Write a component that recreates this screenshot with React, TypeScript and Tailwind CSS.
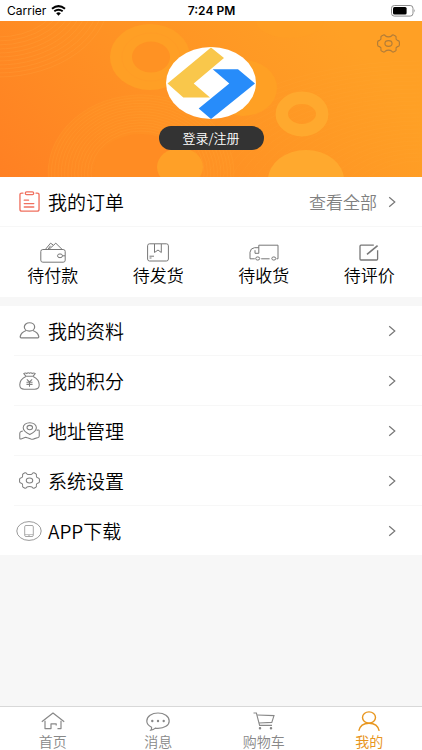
import React from 'react';

interface IconProps {
  className?: string;
}

const GEAR_PATH =
  'M6.2 0.9 Q7.4 0.7 8.2 1.9 Q9 2.7 11 2.7 Q13 2.7 13.8 1.9 Q14.6 0.7 15.8 0.9 L17.6 1.8 Q18.6 2.4 18.2 3.8 Q17.8 5.4 19.6 6 Q21.4 6.4 21.4 7.6 V10.4 Q21.4 11.6 19.6 12 Q17.8 12.6 18.2 14.2 Q18.6 15.6 17.6 16.2 L15.8 17.1 Q14.6 17.3 13.8 16.1 Q13 15.3 11 15.3 Q9 15.3 8.2 16.1 Q7.4 17.3 6.2 17.1 L4.4 16.2 Q3.4 15.6 3.8 14.2 Q4.2 12.6 2.4 12 Q0.6 11.6 0.6 10.4 V7.6 Q0.6 6.4 2.4 6 Q4.2 5.4 3.8 3.8 Q3.4 2.4 4.4 1.8 Z';

const GearIcon: React.FC<IconProps> = ({ className }) => (
  <svg viewBox="0 0 22 18" preserveAspectRatio="none" className={className} fill="none" stroke="currentColor" strokeWidth="1.1" aria-hidden="true">
    <path d={GEAR_PATH} />
    <ellipse cx="11" cy="9" rx="3.4" ry="2.7" />
  </svg>
);

const ClipboardIcon: React.FC<IconProps> = ({ className }) => (
  <svg viewBox="0 0 22 22" className={className} fill="none" stroke="currentColor" strokeWidth="1.4" strokeLinecap="round" aria-hidden="true">
    <path d="M4.2 2.2 H3 Q1 2.2 1 4 V19 Q1 21 3 21 H19 Q21 21 21 19 V4 Q21 2.2 19 2.2 H17.8" />
    <rect x="6.6" y="1" width="8.8" height="2.8" rx="1.4" />
    <path d="M5.5 9.6 H10 M5.5 13.2 H15.5 M5.5 16.8 H15.5" />
  </svg>
);

const WalletIcon: React.FC<IconProps> = ({ className }) => (
  <svg viewBox="0 0 26 21" className={className} fill="none" stroke="currentColor" aria-hidden="true">
    <rect x="0.8" y="7.5" width="24.4" height="12.7" rx="2" />
    <path d="M5.5 7.3 L10.5 1.2 L13 2.8 M9 7.3 L15.8 1.2 L22 7.3 M10.5 3.8 L8 7.3" />
    <ellipse cx="20" cy="13.8" rx="2.5" ry="1.9" />
    <path d="M22.5 13.8 H25" />
  </svg>
);

const BoxIcon: React.FC<IconProps> = ({ className }) => (
  <svg viewBox="0 0 22 19" className={className} fill="none" stroke="currentColor" aria-hidden="true">
    <rect x="0.6" y="0.8" width="20.8" height="17.2" rx="2" />
    <path d="M7.5 1 V9.5 L11 7 L14.3 9.5 V1 M2.5 13.2 H7 M2.5 15 H4.5" />
  </svg>
);

const TruckIcon: React.FC<IconProps> = ({ className }) => (
  <svg viewBox="0 0 30 17" className={className} fill="none" stroke="currentColor" aria-hidden="true">
    <path d="M5.8 14.8 H1 V8.2 Q1.4 4.2 5.5 3.7 H9.8 M9.8 9.3 V1.2 H29 V14.8 H27.6 M9.8 9.3 H6 V6.2 M12.2 14.8 H20.6" />
    <ellipse cx="8.7" cy="14.5" rx="2" ry="1.6" />
    <ellipse cx="24.8" cy="14.5" rx="2" ry="1.6" />
  </svg>
);

const ReviewIcon: React.FC<IconProps> = ({ className }) => (
  <svg viewBox="0 0 20 17" className={className} fill="none" stroke="currentColor" strokeWidth="1.3" aria-hidden="true">
    <path d="M14.8 1.2 H2 Q1 1.2 1 2.2 V15 Q1 16 2 16 H17.6 Q18.6 16 18.6 15 V6.2" />
    <path d="M8 10.3 L18.6 1.6" strokeWidth="1.6" />
  </svg>
);

const ProfileIcon: React.FC<IconProps> = ({ className }) => (
  <svg viewBox="0 0 22 18" preserveAspectRatio="none" className={className} fill="none" stroke="currentColor" strokeWidth="1.3" aria-hidden="true">
    <ellipse cx="11" cy="5.2" rx="5.4" ry="4.4" />
    <path d="M7.5 9 Q2.2 11 1.3 15.3 Q1.2 16.9 3 16.9 H19 Q20.8 16.9 20.7 15.3 Q19.8 11 14.5 9" />
  </svg>
);

const PointsIcon: React.FC<IconProps> = ({ className }) => (
  <svg viewBox="0 0 22 18" preserveAspectRatio="none" className={className} fill="none" stroke="currentColor" strokeWidth="1.1" aria-hidden="true">
    <path d="M7.2 4.2 L5 1.6 Q6.5 0.5 8.2 1.5 Q9.5 0.2 11 1.3 Q12.5 0.2 13.8 1.5 Q15.5 0.5 17 1.6 L14.8 4.2 Z" />
    <path d="M7.2 4.5 C3.5 6.2 0.8 9.5 0.8 12.8 Q0.8 17.2 5.5 17.2 H16.5 Q21.2 17.2 21.2 12.8 C21.2 9.5 18.5 6.2 14.8 4.5" />
    <path d="M8.2 7.4 L11 10 L13.8 7.4 M11 10 V14.8 M7.8 10.3 H14.2 M7.8 12.4 H14.2" />
  </svg>
);

const AddressIcon: React.FC<IconProps> = ({ className }) => (
  <svg viewBox="0 0 22 18" preserveAspectRatio="none" className={className} fill="none" stroke="currentColor" strokeWidth="1.1" aria-hidden="true">
    <path d="M11.3 12.6 C7 10.6 4.4 8.6 4.4 5.8 C4.4 2.9 7.3 0.7 11.3 0.7 C15.3 0.7 18.2 2.9 18.2 5.8 C18.2 8.6 15.6 10.6 11.3 12.6 Z" />
    <ellipse cx="11.3" cy="5.6" rx="2.9" ry="2.2" />
    <path d="M4 9 L2.2 9.6 Q0.8 10.2 0.8 11.6 V16.2 Q0.8 17.3 2.2 16.9 L6.2 15.5 Q7.5 15.2 8.8 15.7 L12.5 17 Q14 17.4 15.5 16.9 L20 15.6 Q21.2 15.1 21.2 14 V8.9 Q21.2 7.8 20 8 L18.5 8.4" />
  </svg>
);

const DownloadIcon: React.FC<IconProps> = ({ className }) => (
  <svg viewBox="0 0 26 20" className={className} fill="none" stroke="currentColor" aria-hidden="true">
    <ellipse cx="13" cy="10" rx="12.2" ry="9.4" opacity="0.8" />
    <rect x="8.7" y="4.5" width="8.6" height="11" rx="1.2" opacity="0.7" />
    <path d="M9 13.6 H17 M12.2 14.6 H13.8" opacity="0.5" />
  </svg>
);

const ChevronIcon: React.FC<IconProps> = ({ className }) => (
  <svg viewBox="0 0 8 12" className={className} fill="none" stroke="currentColor" strokeWidth="1.2" aria-hidden="true">
    <path d="M1.2 1.2 L6.8 6 L1.2 10.8" />
  </svg>
);

const HomeIcon: React.FC<IconProps> = ({ className }) => (
  <svg viewBox="0 0 24 18" className={className} fill="none" stroke="currentColor" strokeWidth="1.2" strokeLinejoin="round" aria-hidden="true">
    <path d="M0.8 9.8 L12 1 L23.2 9.8" />
    <path d="M4 8.8 V16.6 H10 V11.8 H15.2 V13.6 M16.5 16.6 H20 V8.8" />
  </svg>
);

const MessageIcon: React.FC<IconProps> = ({ className }) => (
  <svg viewBox="0 0 24 19" className={className} fill="none" stroke="currentColor" strokeWidth="1.2" aria-hidden="true">
    <path d="M5.5 15.2 C2.5 13.7 0.8 11.6 0.8 9 C0.8 4.4 5.8 1 12 1 C18.2 1 23.2 4.4 23.2 9 C23.2 13.4 18.2 16.4 12 16.4 Q10.5 16.4 9.3 16.1 Q7.5 17.8 4.8 18.2 Q5.9 16.8 5.5 15.2 Z" />
    <g fill="currentColor" stroke="none">
      <circle cx="6.3" cy="9" r="1.2" />
      <circle cx="12" cy="9" r="1.2" />
      <circle cx="17.7" cy="9" r="1.2" />
    </g>
  </svg>
);

const CartIcon: React.FC<IconProps> = ({ className }) => (
  <svg viewBox="0 0 22 18" className={className} fill="none" stroke="currentColor" strokeWidth="1.1" aria-hidden="true">
    <path d="M0.5 1 H3.4 L6.6 13.4 H19" />
    <path d="M4.2 3 L21 3.6 L18.8 10.4 L6 11" />
    <circle cx="7" cy="16.2" r="0.7" fill="currentColor" />
    <circle cx="18" cy="16.2" r="0.7" fill="currentColor" />
  </svg>
);

const MineIcon: React.FC<IconProps> = ({ className }) => (
  <svg viewBox="0 0 22 20" className={className} fill="none" stroke="currentColor" strokeWidth="1.4" aria-hidden="true">
    <ellipse cx="11" cy="6.5" rx="6.5" ry="5.6" />
    <path d="M0.8 19.8 Q2.4 12.2 11 12.2 Q19.6 12.2 21.2 19.8" />
  </svg>
);

const StatusBar: React.FC = () => (
  <div className="h-[21px] grid grid-cols-3 items-center bg-white pl-[7px] pr-[6px] text-xs font-normal text-black font-['Inter',sans-serif]">
    <div className="flex items-center gap-[5px]">
      <span>Carrier</span>
      <svg viewBox="0 0 15 11" className="w-[15px] h-[11px]" aria-hidden="true">
        <path d="M1 3.8 Q7.5 -1.6 14 3.8" fill="none" stroke="#000" strokeWidth="2" />
        <path d="M3.3 6.3 Q7.5 3 11.7 6.3" fill="none" stroke="#000" strokeWidth="1.9" />
        <path d="M5.2 8.3 Q7.5 6.4 9.8 8.3 L7.5 10.8 Z" />
      </svg>
    </div>
    <span className="text-center font-semibold">7:24 PM</span>
    <svg viewBox="0 0 25 12" className="w-[25px] h-3 justify-self-end" aria-hidden="true">
      <rect x="0.5" y="0.5" width="21.5" height="10.6" rx="2.8" fill="none" stroke="#8d8d8d" />
      <rect x="2" y="2" width="13.6" height="7.6" rx="1.5" />
      <path d="M23.3 4 Q24.8 5.8 23.3 7.6 Z" fill="#8d8d8d" />
    </svg>
  </div>
);

const BannerPattern: React.FC = () => (
  <svg viewBox="0 0 422 156" preserveAspectRatio="none" className="absolute inset-0 w-full h-full" aria-hidden="true">
    <defs>
      <linearGradient id="banner" gradientUnits="userSpaceOnUse" x1="0" y1="156" x2="260" y2="-80">
        <stop offset="0" stopColor="#ff8023" />
        <stop offset="0.5" stopColor="#ff9224" />
        <stop offset="1" stopColor="#ffa025" />
      </linearGradient>
    </defs>
    <rect width="422" height="156" fill="url(#banner)" />
    <g fill="none" stroke="#ffb14a" strokeOpacity="0.25" strokeWidth="0.8">
      {Array.from({ length: 11 }, (_, i) => (
        <ellipse key={i} cx="-2" cy="-26" rx={62 + i * 5} ry={42 + i * 4} />
      ))}
    </g>
    <g fill="none" stroke="#ffb14a" strokeOpacity="0.1" strokeWidth="0.8">
      {Array.from({ length: 26 }, (_, i) => (
        <ellipse key={i} cx="420" cy="190" rx={70 + i * 8} ry={50 + i * 4} />
      ))}
    </g>
    <ellipse cx="141" cy="152" rx="93" ry="78" fill="#ff9624" fillOpacity="0.25" />
    <g fill="none" stroke="#ffae3e" strokeOpacity="0.22" strokeWidth="0.8">
      {Array.from({ length: 14 }, (_, i) => (
        <ellipse key={i} cx="141" cy="152" rx={50 + i * 3.3} ry={42 + i * 2.77} />
      ))}
    </g>
    <ellipse cx="141" cy="152" rx="47" ry="39" fill="#ff8c23" />
    <ellipse cx="150" cy="36" rx="40" ry="33" fill="#ff9f25" />
    <ellipse cx="151" cy="36" rx="29" ry="24" fill="none" stroke="#ff9a25" strokeOpacity="0.5" />
    <ellipse cx="151" cy="36" rx="19" ry="15.5" fill="#ff9223" />
    <ellipse cx="180" cy="146" rx="23" ry="19" fill="#ffa027" />
    <ellipse cx="243" cy="67" rx="34" ry="28" fill="#ffa024" />
    <ellipse cx="290" cy="0" rx="34" ry="17" fill="#ffa024" fillOpacity="0.5" />
    <ellipse cx="302" cy="93" rx="20.2" ry="16.2" fill="none" stroke="#ffa92e" strokeWidth="12.4" />
    <ellipse cx="306" cy="159" rx="38" ry="30" fill="#ffa92e" />
  </svg>
);

const Logo: React.FC = () => (
  <svg viewBox="0 0 90 72" className="w-[90px] h-[72px]" role="img" aria-label="logo">
    <ellipse cx="45" cy="36" rx="45" ry="36" fill="#fff" />
    <path d="M45 0.5 L58 11 L27.7 36.5 L44 50.5 H17.3 L1.5 36.5 Z" fill="#f9c74b" />
    <path d="M46.7 22.3 H72 L89 36.5 L45 72 L32.7 61.5 L63.3 36.5 Z" fill="#278cfa" />
  </svg>
);

const orders = [
  { label: '待付款', icon: <WalletIcon className="w-[26px] h-[21px]" /> },
  { label: '待发货', icon: <BoxIcon className="w-[22px] h-[19px]" /> },
  { label: '待收货', icon: <TruckIcon className="w-[30px] h-[17px]" /> },
  { label: '待评价', icon: <ReviewIcon className="w-5 h-[17px]" /> },
];

const menu = [
  { label: '我的资料', icon: <ProfileIcon className="w-[21px] h-[17px]" /> },
  { label: '我的积分', icon: <PointsIcon className="w-[21px] h-[18px]" /> },
  { label: '地址管理', icon: <AddressIcon className="w-[21px] h-[18px]" /> },
  { label: '系统设置', icon: <GearIcon className="w-[21px] h-[17px]" /> },
  { label: 'APP下载', icon: <DownloadIcon className="w-[26px] h-5" /> },
];

const tabs = [
  { label: '首页', icon: <HomeIcon className="w-6 h-[18px]" />, active: false },
  { label: '消息', icon: <MessageIcon className="w-6 h-[19px]" />, active: false },
  { label: '购物车', icon: <CartIcon className="w-[22px] h-[18px]" />, active: false },
  { label: '我的', icon: <MineIcon className="w-[22px] h-5" />, active: true },
];

const App: React.FC = () => {
  return (
    <div className="min-h-screen flex flex-col bg-[#f7f7f7] text-black font-[350] font-['Noto_Sans_CJK_SC',sans-serif]">
      <StatusBar />

      <header className="relative">
        <BannerPattern />
        <div className="relative flex flex-col items-center pt-[26px] pb-[27px]">
          <Logo />
          <button className="mt-[7px] w-[105px] h-6 rounded-full bg-[#333333] text-white text-[13px] leading-6">
            登录/注册
          </button>
        </div>
        <button className="absolute top-[13px] right-[22px] text-[#b17c38]" aria-label="设置">
          <GearIcon className="w-[23px] h-[19px]" />
        </button>
      </header>

      <section className="bg-white">
        <a href="#orders" className="flex items-center h-[50px] pl-[19px] pr-[26px] border-b border-[#f7f7f7]">
          <ClipboardIcon className="w-[21px] h-[21px] text-[#f0705f]" />
          <span className="ml-2 text-[19px] leading-6">我的订单</span>
          <span className="ml-auto text-[17px] leading-6 text-[#808080]">查看全部</span>
          <ChevronIcon className="ml-[11px] w-2 h-3 text-[#777777]" />
        </a>
        <nav className="grid grid-cols-4 h-[70px]">
          {orders.map((item) => (
            <a key={item.label} href="#orders" className="flex flex-col items-center pt-[14px]">
              <span className="h-[22px] flex items-center text-[#777777]">{item.icon}</span>
              <span className="text-[17px] leading-6">{item.label}</span>
            </a>
          ))}
        </nav>
      </section>

      <ul className="mt-[9px] pl-[14px] bg-white divide-y divide-[#f7f7f7]">
        {menu.map((item) => (
          <li key={item.label}>
            <a href="#menu" className="flex items-center h-[49px] pr-[26px]">
              <span className="w-[30px] flex justify-center text-[#808080]">{item.icon}</span>
              <span className="ml-1 flex-1 text-[19px] leading-6">{item.label}</span>
              <ChevronIcon className="w-2 h-3 text-[#777777]" />
            </a>
          </li>
        ))}
      </ul>

      <nav className="mt-auto grid grid-cols-4 h-11 bg-white border-t border-[#d8d8d8]">
        {tabs.map((tab) => (
          <a
            key={tab.label}
            href="#tab"
            className={`flex flex-col items-center pt-1 ${tab.active ? 'text-[#e8961e] font-normal' : 'text-[#888888]'}`}
          >
            <span className="h-5 flex items-center">{tab.icon}</span>
            <span className="text-sm leading-5">{tab.label}</span>
          </a>
        ))}
      </nav>
    </div>
  );
};

export default App;
